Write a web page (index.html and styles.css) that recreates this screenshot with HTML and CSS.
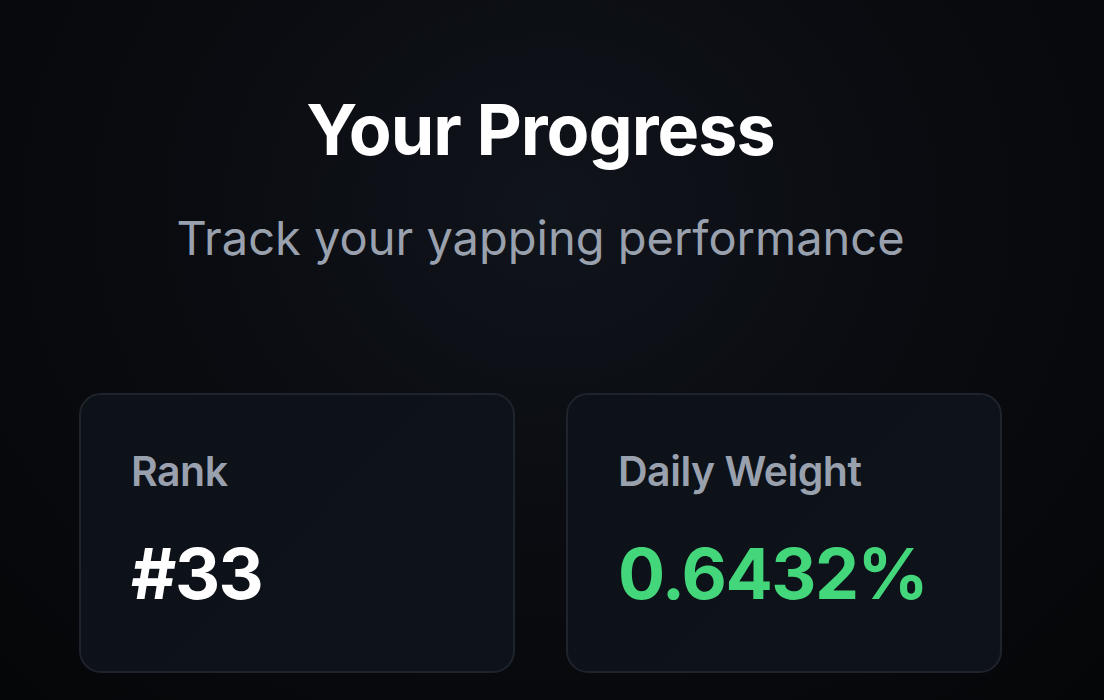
FILE: index.html
```html
<!DOCTYPE html>
<html lang="en">
<head>
<meta charset="utf-8">
<title>Your Progress</title>
<link rel="stylesheet" href="styles.css">
</head>
<body>
<main class="page">
  <header class="hero">
    <h1 class="title">Your Progress</h1>
    <p class="subtitle">Track your yapping performance</p>
  </header>
  <section class="stats">
    <div class="card">
      <div class="label">Rank</div>
      <div class="value">#33</div>
    </div>
    <div class="card">
      <div class="label">Daily Weight</div>
      <div class="value green">0.6432%</div>
    </div>
  </section>
</main>
</body>
</html>
```

FILE: styles.css
```css
* { box-sizing: border-box; }
html, body { margin: 0; padding: 0; }
body {
  min-height: 100vh;
  background: radial-gradient(ellipse at 50% 30%, #10141b 0%, #0a0c11 45%, #050608 100%);
  font-family: Inter, "Noto Sans", sans-serif;
  color: #fff;
  overflow: hidden;
}
.page {
  width: 1081px;
  padding: 88px 79px 0;
}
.hero {
  display: flex;
  flex-direction: column;
  align-items: center;
}
.title {
  margin: 0;
  font-size: 70px;
  font-weight: 700;
  letter-spacing: -1px;
  line-height: 1.2;
}
.subtitle {
  margin: 38px 0 0;
  font-size: 47px;
  font-weight: 400;
  color: #9aa1ae;
  letter-spacing: 0;
  line-height: 1.2;
}
.stats {
  margin-top: 127px;
  display: grid;
  grid-template-columns: 1fr 1fr;
  gap: 51px;
}
.card {
  height: 280px;
  border: 2px solid #1e232c;
  border-radius: 22px;
  background: linear-gradient(135deg, #0d1118 0%, #0e131b 100%);
  padding: 52px 50px;
}
.label {
  font-size: 41px;
  font-weight: 600;
  color: #9aa1ae;
  letter-spacing: -0.5px;
  line-height: 1.2;
}
.value {
  margin-top: 35px;
  font-size: 70px;
  font-weight: 700;
  letter-spacing: -1.5px;
  line-height: 1.2;
}
.green { color: #43d67a; }
```
